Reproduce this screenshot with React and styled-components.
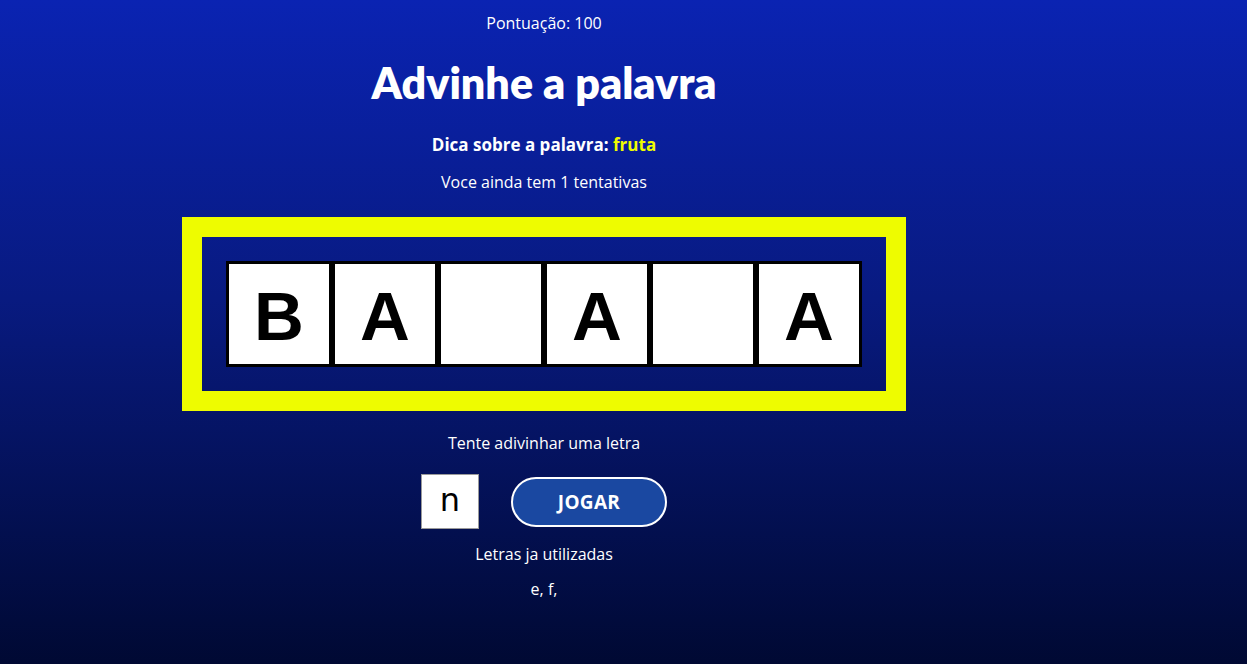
import React from "react";
import styled, { createGlobalStyle } from "styled-components";

const GlobalStyle = createGlobalStyle`
  html, body { margin: 0; padding: 0; }
  body {
    min-height: 100vh;
    background: linear-gradient(180deg, #0a23b2 0%, #081a80 45%, #000933 100%);
    font-family: "Open Sans", "DejaVu Sans", sans-serif;
    color: #ffffff;
  }
`;

const Page = styled.main`
  display: flex;
  min-height: 664px;
  padding-left: 182px;
`;

const Column = styled.section`
  width: 724px;
  display: flex;
  flex-direction: column;
  align-items: center;
`;

const Text = styled.p`
  margin: ${(p) => p.$mt || 0}px 0 0;
  font-size: 16px;
  line-height: 20px;
  text-align: center;
`;

const Title = styled.h1`
  margin: 24px 0 0;
  font-family: Lato, "Open Sans", sans-serif;
  font-size: 43px;
  line-height: 52px;
  font-weight: 800;
  letter-spacing: 0;
`;

const Hint = styled.h3`
  margin: 24px 0 0;
  font-size: 17px;
  line-height: 24px;
  font-weight: 700;
`;

const Highlight = styled.span`
  color: #eefc00;
`;

const Frame = styled.div`
  margin-top: 25px;
  box-sizing: border-box;
  width: 724px;
  border: 20px solid #eefc00;
  padding: 24px;
  display: flex;
`;

const Letters = styled.div`
  display: flex;
`;

const LetterBox = styled.div`
  box-sizing: border-box;
  width: 106px;
  height: 106px;
  border: 3px solid #000;
  background: #fff;
  display: flex;
  align-items: center;
  justify-content: center;
  font-family: "Liberation Sans", Arial, sans-serif;
  font-weight: 700;
  font-size: 69px;
  line-height: 1;
  color: #000;
  padding-top: 4px;
`;

const GuessRow = styled.form`
  margin-top: 21px;
  display: flex;
  align-items: center;
  gap: 32px;
`;

const LetterInput = styled.input`
  box-sizing: border-box;
  width: 58px;
  height: 55px;
  border: 1px solid #9a9a9a;
  background: #fff;
  font-family: "DejaVu Sans", sans-serif;
  font-size: 32px;
  text-align: center;
  color: #000;
  padding: 0 0 4px;
  outline: none;
`;

const PlayButton = styled.button`
  box-sizing: border-box;
  width: 156px;
  height: 50px;
  border: 2px solid #fff;
  border-radius: 25px;
  background: #1a48a1;
  color: #fff;
  font-family: "Open Sans", sans-serif;
  font-weight: 700;
  font-size: 19px;
  letter-spacing: 0.3px;
  cursor: pointer;
`;

const word = ["B", "A", "", "A", "", "A"];

export default function App() {
  return (
    <>
      <GlobalStyle />
      <Page>
        <Column>
          <Text $mt={13}>Pontuação: 100</Text>
          <Title>Advinhe a palavra</Title>
          <Hint>
            Dica sobre a palavra: <Highlight>fruta</Highlight>
          </Hint>
          <Text $mt={15}>Voce ainda tem 1 tentativas</Text>
          <Frame>
            <Letters>
              {word.map((l, i) => (
                <LetterBox key={i}>{l}</LetterBox>
              ))}
            </Letters>
          </Frame>
          <Text $mt={22}>Tente adivinhar uma letra</Text>
          <GuessRow onSubmit={(e) => e.preventDefault()}>
            <LetterInput type="text" maxLength={1} defaultValue="n" />
            <PlayButton type="submit">JOGAR</PlayButton>
          </GuessRow>
          <Text $mt={15}>Letras ja utilizadas</Text>
          <Text $mt={15}>e, f,</Text>
        </Column>
      </Page>
    </>
  );
}
